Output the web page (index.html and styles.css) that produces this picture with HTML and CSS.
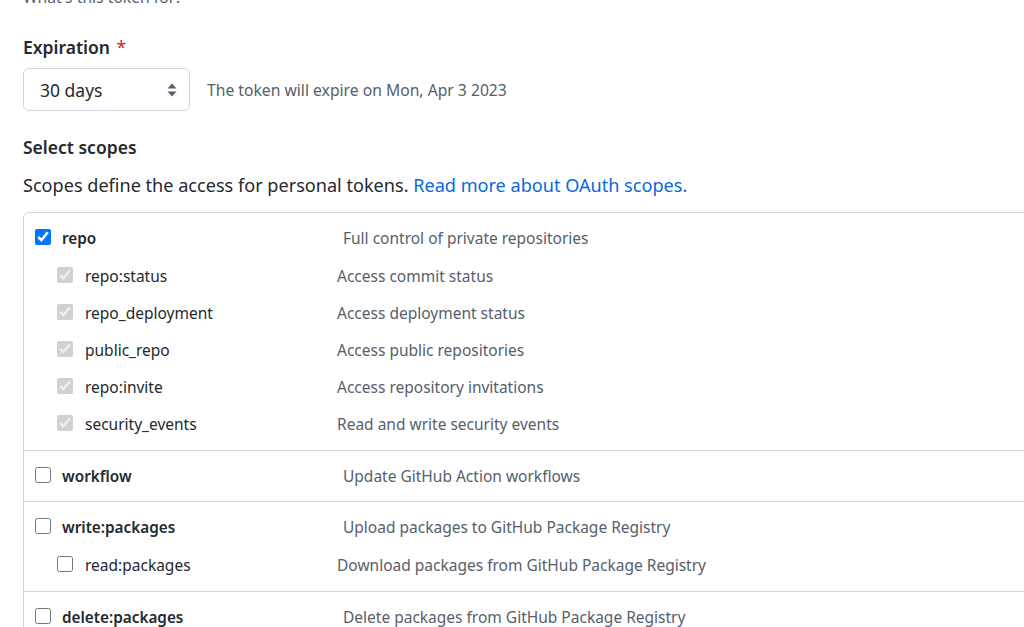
FILE: index.html
```html
<!DOCTYPE html>
<html>
<head>
<meta charset="utf-8">
<link rel="stylesheet" href="styles.css">
</head>
<body>
<div class="page">
  <p class="cut">What's this token for?</p>
  <div class="field">
    <div class="label">Expiration <span class="req">*</span></div>
    <div class="exp-row">
      <div class="select">
        <span>30 days</span>
        <svg class="arrows" width="10" height="16" viewBox="0 0 10 16"><path d="M5 1.5 L9.5 6.5 H0.5 Z M5 14.5 L9.5 9.5 H0.5 Z" fill="#57606a"/></svg>
      </div>
      <span class="note">The token will expire on Mon, Apr 3 2023</span>
    </div>
  </div>
  <div class="label scopes-title">Select scopes</div>
  <p class="desc">Scopes define the access for personal tokens. <a class="link" href="#">Read more about OAuth scopes.</a></p>

  <div class="scopes">
    <div class="group">
      <div class="row main"><span class="cell"><input type="checkbox" checked><span class="name">repo</span></span><span class="sdesc">Full control of private repositories</span></div>
      <div class="subs">
        <div class="row sub"><span class="cell"><input type="checkbox" checked disabled><span class="name">repo:status</span></span><span class="sdesc">Access commit status</span></div>
        <div class="row sub"><span class="cell"><input type="checkbox" checked disabled><span class="name">repo_deployment</span></span><span class="sdesc">Access deployment status</span></div>
        <div class="row sub"><span class="cell"><input type="checkbox" checked disabled><span class="name">public_repo</span></span><span class="sdesc">Access public repositories</span></div>
        <div class="row sub"><span class="cell"><input type="checkbox" checked disabled><span class="name">repo:invite</span></span><span class="sdesc">Access repository invitations</span></div>
        <div class="row sub"><span class="cell"><input type="checkbox" checked disabled><span class="name">security_events</span></span><span class="sdesc">Read and write security events</span></div>
      </div>
    </div>
    <div class="group">
      <div class="row main"><span class="cell"><input type="checkbox"><span class="name">workflow</span></span><span class="sdesc">Update GitHub Action workflows</span></div>
    </div>
    <div class="group">
      <div class="row main"><span class="cell"><input type="checkbox"><span class="name">write:packages</span></span><span class="sdesc">Upload packages to GitHub Package Registry</span></div>
      <div class="subs">
        <div class="row sub"><span class="cell"><input type="checkbox"><span class="name">read:packages</span></span><span class="sdesc">Download packages from GitHub Package Registry</span></div>
      </div>
    </div>
    <div class="group">
      <div class="row main"><span class="cell"><input type="checkbox"><span class="name">delete:packages</span></span><span class="sdesc">Delete packages from GitHub Package Registry</span></div>
    </div>
  </div>
</div>
</body>
</html>
```

FILE: styles.css
```css
html, body {
  margin: 0;
  padding: 0;
  background: #ffffff;
  overflow: hidden;
}
body {
  font-family: "Noto Sans", "Open Sans", sans-serif;
  font-size: 17.5px;
  color: #24292f;
  width: 1024px;
  height: 627px;
}
.page {
  padding-left: 23px;
}
.cut {
  margin: -15px 0 0;
  line-height: 24px;
  font-size: 15.7px;
  color: #57606a;
}
.field {
  margin-top: 26px;
}
.label {
  font-weight: 600;
  line-height: 24px;
  font-size: 17.5px;
}
.req {
  color: #cf222e;
  font-weight: 400;
  margin-left: 2px;
}
.exp-row {
  margin-top: 9px;
  display: flex;
  align-items: center;
  gap: 17px;
}
.select {
  box-sizing: border-box;
  width: 167px;
  height: 43px;
  border: 1px solid #d0d7de;
  border-radius: 6px;
  display: flex;
  align-items: center;
  justify-content: space-between;
  padding: 0 12px 0 16px;
  font-size: 17.5px;
}
.arrows {
  display: block;
}
.note {
  font-size: 15.7px;
  color: #57606a;
}
.scopes-title {
  margin-top: 24px;
}
.desc {
  margin: 14px 0 0;
  line-height: 24px;
  font-size: 18.1px;
}
.link {
  color: #0969da;
  text-decoration: none;
}
.scopes {
  margin-top: 15px;
  width: 1100px;
  border: 1px solid #d0d7de;
  border-radius: 6px;
}
.group {
  padding: 11px 0 13px 11px;
}
.group + .group {
  border-top: 1px solid #d0d7de;
}
.subs {
  padding-top: 1px;
  padding-bottom: 1px;
  padding-left: 22px;
}
.row {
  display: flex;
  align-items: center;
  height: 26px;
}
.sub {
  margin-top: 11px;
}
.cell {
  display: flex;
  align-items: center;
}
.main .cell {
  width: 308px;
  gap: 11px;
}
.sub .cell {
  width: 280px;
  gap: 12px;
}
input[type="checkbox"] {
  width: 16px;
  height: 16px;
  margin: 0;
  flex: none;
}
.name,
.sdesc {
  padding-top: 2px;
}
.main .name {
  font-weight: 600;
  font-size: 15.3px;
}
.sub .name {
  font-size: 15.5px;
}
.sdesc {
  color: #57606a;
  font-size: 15.5px;
  white-space: nowrap;
}
```
